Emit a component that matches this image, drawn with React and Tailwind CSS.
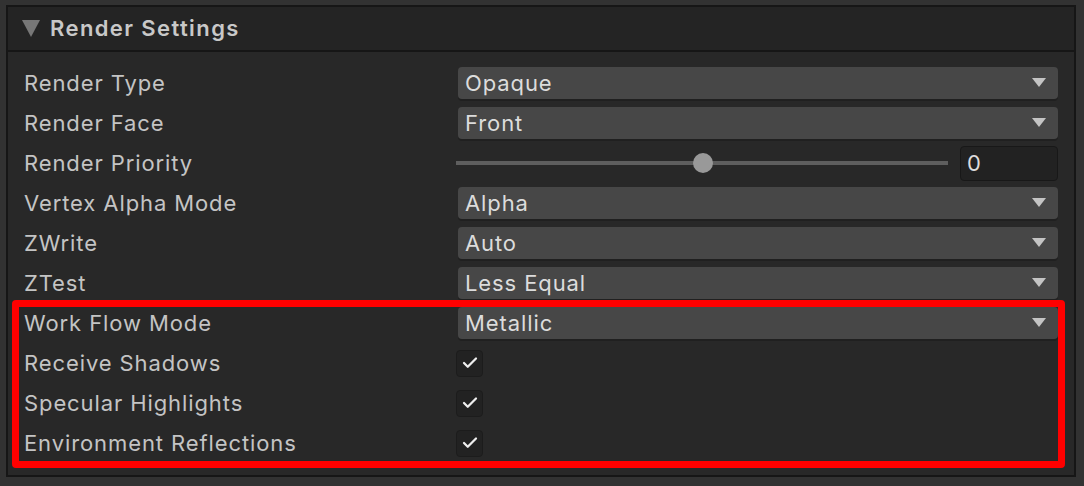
import { Check } from "lucide-react";

const rows = [
  { label: "Render Type", type: "select", value: "Opaque" },
  { label: "Render Face", type: "select", value: "Front" },
  { label: "Render Priority", type: "slider", value: "0" },
  { label: "Vertex Alpha Mode", type: "select", value: "Alpha" },
  { label: "ZWrite", type: "select", value: "Auto" },
  { label: "ZTest", type: "select", value: "Less Equal" },
  { label: "Work Flow Mode", type: "select", value: "Metallic" },
  { label: "Receive Shadows", type: "check" },
  { label: "Specular Highlights", type: "check" },
  { label: "Environment Reflections", type: "check" },
];

const Arrow = () => (
  <svg width="14" height="10" viewBox="0 0 14 10" className="shrink-0">
    <path d="M0 0 L14 0 L7 9 Z" fill="#c4c4c4" />
  </svg>
);

const Select = ({ value }) => (
  <div className="flex-1 h-8 flex items-center justify-between pl-[7px] pr-3 bg-[#474747] rounded-[4px] shadow-[0_2px_0_#202020] text-[#dcdcdc]">
    <span>{value}</span>
    <Arrow />
  </div>
);

const Slider = ({ value }) => (
  <div className="flex-1 flex items-center gap-[12px]">
    <div className="relative flex-1 h-1 bg-[#5e5e5e] ml-[-2px]">
      <div className="absolute left-[237px] top-1/2 -translate-y-1/2 w-5 h-5 rounded-full bg-[#999999]" />
    </div>
    <div className="w-[98px] h-[35px] flex items-center px-[6px] bg-[#222222] border border-[#181818] rounded-[4px] text-[#dcdcdc]">
      {value}
    </div>
  </div>
);

const CheckBox = () => (
  <div className="w-[27px] h-[27px] ml-[-2px] flex items-center justify-center bg-[#222222] border border-[#1c1c1c] rounded-[4px]">
    <Check className="w-[18px] h-[18px] text-[#eeeeee]" strokeWidth={3} />
  </div>
);

export default function App() {
  return (
    <div className="w-[1084px] h-[486px] bg-[#323232] pt-[5px] pl-[6px] font-['Inter',sans-serif]">
      <div className="relative w-[1070px] h-[472px] border-2 border-[#161616] bg-[#282828] flex flex-col">
        <div className="h-[45px] flex items-center gap-[10px] pl-[14px] bg-[#242424] border-b-2 border-[#161616] shrink-0">
          <svg width="18" height="17" viewBox="0 0 18 17">
            <path d="M0 0 L18 0 L9 17 Z" fill="#777777" />
          </svg>
          <span className="text-[22px] font-semibold text-[#c8c8c8] tracking-[1.4px]">Render Settings</span>
        </div>
        <div className="flex flex-col pt-[11px] pl-4 pr-4 text-[22px] tracking-[0.9px]">
          {rows.map((r) => (
            <div key={r.label} className="h-10 flex items-center">
              <div className="w-[434px] text-[#c4c4c4] shrink-0">{r.label}</div>
              {r.type === "select" && <Select value={r.value} />}
              {r.type === "slider" && <Slider value={r.value} />}
              {r.type === "check" && <CheckBox />}
            </div>
          ))}
        </div>
        <div className="absolute left-[4px] top-[293px] w-[1053px] h-[168px] border-[7px] border-[#ff0000] rounded-[4px] pointer-events-none" />
      </div>
    </div>
  );
}
